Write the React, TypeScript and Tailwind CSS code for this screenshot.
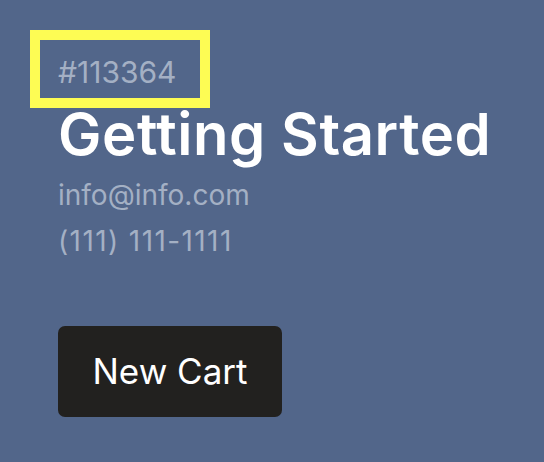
const App = () => {
  return (
    <div className="relative min-h-screen w-full bg-[#52668a] font-['Inter',sans-serif]">
      {/* highlight around the hex label */}
      <div className="pointer-events-none absolute left-[30px] top-[30px] h-[78px] w-[180px] border-[10px] border-[#fdfc54]" />

      <div className="flex flex-col items-start pl-[58px] pt-[57px]">
        <span className="text-[30px] leading-[30px] text-[#a4b0c4]">#113364</span>
        <h1 className="mt-[15px] whitespace-nowrap text-[58px] leading-[64px] font-semibold tracking-[0.01em] text-white">
          Getting Started
        </h1>
        <p className="mt-[6px] text-[28px] leading-[46px] text-[#a4b0c4]">info@info.com</p>
        <p className="text-[28px] leading-[46px] tracking-[1.4px] text-[#a4b0c4]">(111) 111-1111</p>
        <button className="mt-[62px] flex h-[91px] w-[224px] items-center justify-center rounded-[7px] bg-[#22211f] text-[35px] text-white">
          New Cart
        </button>
      </div>
    </div>
  );
};

export default App;
